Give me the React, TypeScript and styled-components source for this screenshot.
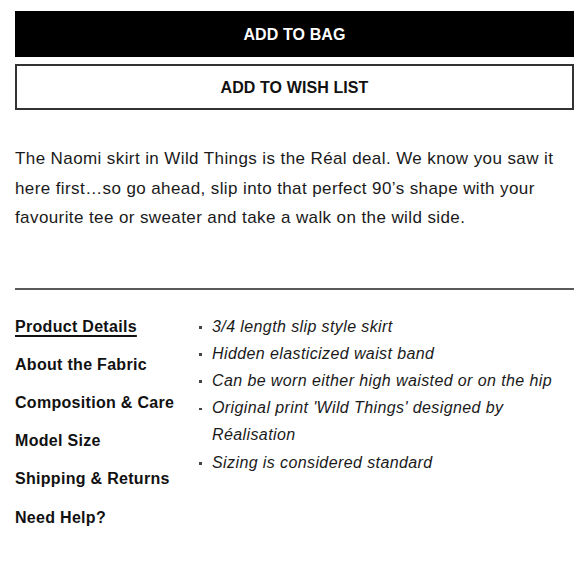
import React from 'react'
import styled, { createGlobalStyle } from 'styled-components'

const GlobalStyle = createGlobalStyle`
  body {
    margin: 0;
    background: #ffffff;
    font-family: 'Liberation Sans', Arial, sans-serif;
    color: #1a1a1a;
  }
`

const Wrapper = styled.div`
  width: 559px;
  padding: 11px 0 0 15px;
`

const Actions = styled.div`
  display: flex;
  flex-direction: column;
  gap: 7px;
`

const Button = styled.button<{ $primary?: boolean }>`
  box-sizing: border-box;
  height: 46px;
  width: 100%;
  border: 2px solid ${p => (p.$primary ? '#000000' : '#333333')};
  background-color: ${p => (p.$primary ? '#000000' : '#ffffff')};
  color: ${p => (p.$primary ? '#ffffff' : '#111111')};
  font-family: 'Liberation Sans', Arial, sans-serif;
  font-weight: 700;
  font-size: 16px;
  letter-spacing: 0.1px;
  padding: 2px 0 0;
  cursor: pointer;
`

const Description = styled.p`
  margin: 34px 0 0;
  font-size: 17px;
  letter-spacing: 0.4px;
  line-height: 29.5px;
  color: #1a1a1a;
`

const Divider = styled.hr`
  margin: 55px 0 0;
  border: 0;
  height: 2px;
  background-color: #5a5a5a;
`

const Details = styled.div`
  display: grid;
  grid-template-columns: 184px 1fr;
  margin-top: 18px;
`

const Nav = styled.ul`
  list-style: none;
  margin: 0;
  padding: 0;
`

const NavItem = styled.li<{ $active?: boolean }>`
  font-size: 16px;
  font-weight: 700;
  letter-spacing: 0.3px;
  line-height: 38.2px;
  color: #111111;
  text-decoration: ${p => (p.$active ? 'underline' : 'none')};
  text-underline-offset: 3px;
  text-decoration-thickness: 1.5px;
`

const Bullets = styled.ul`
  list-style: none;
  margin: 0;
  padding: 5px 0 0;
`

const Bullet = styled.li`
  position: relative;
  padding-left: 13px;
  font-size: 16px;
  font-style: italic;
  letter-spacing: 0.4px;
  line-height: 27.2px;
  color: #1a1a1a;

  &::before {
    content: '';
    position: absolute;
    left: 0;
    top: 13.5px;
    width: 2.5px;
    height: 2.5px;
    background-color: #444444;
  }
`

const productDetails = [
  '3/4 length slip style skirt',
  'Hidden elasticized waist band',
  'Can be worn either high waisted or on the hip',
  "Original print 'Wild Things' designed by Réalisation",
  'Sizing is considered standard',
]

const sections = [
  'Product Details',
  'About the Fabric',
  'Composition & Care',
  'Model Size',
  'Shipping & Returns',
  'Need Help?',
]

const App: React.FC = () => {
  return (
    <Wrapper>
      <GlobalStyle />
      <Actions>
        <Button $primary>ADD TO BAG</Button>
        <Button>ADD TO WISH LIST</Button>
      </Actions>
      <Description>
        The Naomi skirt in Wild Things is the Réal deal. We know you saw it here first…so go ahead, slip into that
        perfect 90’s shape with your favourite tee or sweater and take a walk on the wild side.
      </Description>
      <Divider />
      <Details>
        <Nav>
          {sections.map((item, i) => (
            <NavItem key={item} $active={i === 0}>
              {item}
            </NavItem>
          ))}
        </Nav>
        <Bullets>
          {productDetails.map(item => (
            <Bullet key={item}>{item}</Bullet>
          ))}
        </Bullets>
      </Details>
    </Wrapper>
  )
}

export default App
